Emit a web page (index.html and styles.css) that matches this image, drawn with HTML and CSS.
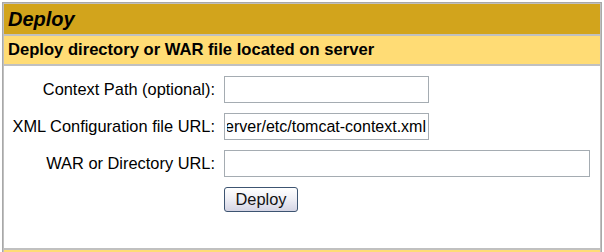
FILE: index.html
```html
<!DOCTYPE html>
<html lang="en">
<head>
    <link rel="stylesheet" href="styles.css">
    <meta charset="UTF-8">
    <title>Tomcat Web Application Manager</title>
</head>
<body>

    <div class="panel">
        <div class="row title">Deploy</div>
        <div class="row header">Deploy directory or WAR file located on server</div>
        <div class="row body">
            <form class="deploy-form">
                <label for="deployPath">Context Path (optional):</label>
                <input type="text" id="deployPath" name="deployPath" class="short">

                <label for="deployConfig">XML Configuration file URL:</label>
                <input type="text" id="deployConfig" name="deployConfig" class="short scrolled" value="file:/home/server/etc/tomcat-context.xml">

                <label for="deployWar">WAR or Directory URL:</label>
                <input type="text" id="deployWar" name="deployWar" class="long">

                <span></span>
                <div><button type="button" class="deploy-button">Deploy</button></div>
            </form>
        </div>
        <div class="row header next"></div>
    </div>

</body>
</html>
```

FILE: styles.css
```css
*{
    margin: 0;
    padding: 0;
    box-sizing: border-box;
}
html, body{
    height: 100%;
}
body{
    font-family: "Liberation Sans", Arial, Helvetica, sans-serif;
    font-size: 16px;
    color: black;
    background: #fff;
    overflow: hidden;
}
.panel{
    margin: 2px 0 0 2px;
    width: 600px;
    border: 1px solid #a8a8a8;
}
.row{
    border: 1px solid #c0c0c0;
}
.title{
    background-color: #d2a41c;
    font-size: 20px;
    font-weight: bold;
    font-style: italic;
    line-height: 30px;
    height: 32px;
    padding: 0 4px;
}
.header{
    background-color: #ffdc75;
    font-size: 16.6px;
    font-weight: bold;
    line-height: 27px;
    height: 30px;
    padding: 0 4px;
}
.next{
    height: 30px;
}
.body{
    background: #fff;
    height: 184px;
    padding-top: 10px;
}
.deploy-form{
    display: grid;
    grid-template-columns: 211px auto;
    column-gap: 9px;
    row-gap: 10px;
    align-items: center;
}
.deploy-form label{
    font-size: 16.4px;
    text-align: right;
}
.deploy-form input{
    height: 27px;
    border: 1px solid #a5acb2;
    font-family: "Liberation Sans", Arial, sans-serif;
    font-size: 16px;
    padding: 0 2px;
    outline: none;
}
.short{
    width: 205px;
}
.long{
    width: 366px;
}
.scrolled{
    direction: rtl;
}
.deploy-button{
    height: 25px;
    width: 74px;
    font-family: "Liberation Sans", Arial, sans-serif;
    font-size: 16.4px;
    color: #111;
    border: 1px solid #3d5471;
    border-radius: 3px;
    background: linear-gradient(#ffffff, #f0f0f6 45%, #d4d4e4);
    cursor: pointer;
}
```
